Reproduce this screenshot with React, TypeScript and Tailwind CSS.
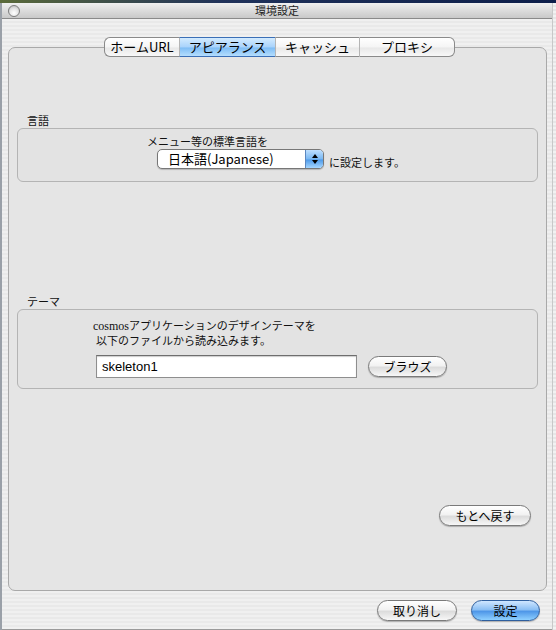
const jp = "font-['Lucida_Grande','Noto_Sans_CJK_JP',sans-serif]";

function AquaButton({ label, w, blue }: { label: string; w: string; blue?: boolean }) {
  return (
    <button
      className={`${w} h-[21px] rounded-full border text-[12px] leading-none text-black shadow-[0_1px_1px_rgba(0,0,0,0.25)] ${jp} ${
        blue
          ? "border-[#2f5f9e] bg-[linear-gradient(180deg,#cfe6ff_0%,#8cc0f4_45%,#4f97e8_55%,#8fd0ff_100%)]"
          : "border-[#7a7a7a] bg-[linear-gradient(180deg,#ffffff_0%,#f2f2f2_45%,#dcdcdc_55%,#f7f7f7_100%)]"
      }`}
    >
      {label}
    </button>
  );
}

function Tab({ label, w, active, first, last }: { label: string; w: string; active?: boolean; first?: boolean; last?: boolean }) {
  return (
    <div
      className={`${w} h-[20px] flex items-center justify-center text-[13px] text-black border-y border-[#8a8a8a] ${
        first ? "border-l rounded-l-[6px]" : "border-l border-l-[#b5b5b5]"
      } ${last ? "border-r rounded-r-[6px]" : ""} ${
        active
          ? "bg-[linear-gradient(180deg,#d3ebff_0%,#a9d3fb_50%,#7fbdf5_55%,#b4defe_100%)] border-y-[#3b6fb6]"
          : "bg-[linear-gradient(180deg,#ffffff_0%,#f5f5f5_50%,#e8e8e8_55%,#f8f8f8_100%)]"
      }`}
    >
      {label}
    </div>
  );
}

export default function App() {
  return (
    <div className={`w-[556px] h-[630px] flex flex-col bg-[#1d2b4c] ${jp}`}>
      <div className="h-[3px] bg-[linear-gradient(90deg,#5b6b3a,#20325a_40%,#0d1e4a)]" />
      <div className="flex flex-1">
        <div className="w-[2px] bg-[#9aa0a8]" />
        {/* window */}
        <div className="flex-1 flex flex-col border-b border-[#9a9a9a]">
          {/* title bar */}
          <div className="h-[16px] flex items-center px-[6px] bg-[linear-gradient(180deg,#f0f0f0_0%,#dcdcdc_50%,#c9c9c9_100%)] border-b border-[#8a8a8a]">
            <div className="w-[12px] h-[12px] rounded-full border border-[#7d7d7d] bg-[radial-gradient(circle_at_50%_70%,#ffffff_0%,#e4e4e4_50%,#b5b5b5_100%)]" />
            <div className="flex-1 text-center text-[11px] text-[#222] pr-[12px]">環境設定</div>
          </div>
          {/* body */}
          <div className="flex-1 flex flex-col px-[5px] pt-[18px] bg-[repeating-linear-gradient(180deg,#f0f0f0_0px,#f0f0f0_2px,#e9e9e9_2px,#e9e9e9_4px)]">
            <div className="relative z-10 flex justify-center pl-[4px] ml-[1px]">
              <Tab label="ホームURL" w="w-[75px]" first />
              <Tab label="アピアランス" w="w-[96px]" active />
              <Tab label="キャッシュ" w="w-[84px]" />
              <Tab label="プロキシ" w="w-[96px]" last />
            </div>
            <div className="-mt-[10px] ml-[1px] h-[544px] flex flex-col px-[8px] border border-[#a9a9a9] rounded-[7px] bg-[#e5e5e5]">
              <div className="mt-[65px] pl-[10px] h-[15px] text-[11px] leading-[15px] text-[#111]">言語</div>
              <div className="h-[54px] border border-[#b4b4b4] rounded-[6px] bg-[#e3e3e3] pl-[129px] pt-[5px]">
                <div className="text-[11px] leading-[15px] text-[#111]">メニュー等の標準言語を</div>
                <div className="flex items-end ml-[10px]">
                  <div className="w-[167px] h-[20px] flex border border-[#777] rounded-[5px] bg-white overflow-hidden shadow-[0_1px_1px_rgba(0,0,0,0.2)]">
                    <div className="flex-1 text-[13px] leading-[18px] pl-[10px] text-black">日本語(Japanese)</div>
                    <div className="w-[18px] flex flex-col items-center justify-center gap-[2px] bg-[linear-gradient(180deg,#bfe0ff_0%,#79b7f2_50%,#4f9bea_55%,#a5d6ff_100%)] border-l border-[#5b87c0]">
                      <div className="w-0 h-0 border-x-[3px] border-x-transparent border-b-[4px] border-b-black" />
                      <div className="w-0 h-0 border-x-[3px] border-x-transparent border-t-[4px] border-t-black" />
                    </div>
                  </div>
                  <div className="ml-[5px] text-[11px] leading-[14px] text-[#111]">に設定します。</div>
                </div>
              </div>
              <div className="mt-[112px] pl-[10px] h-[15px] text-[11px] leading-[15px] text-[#111]">テーマ</div>
              <div className="h-[80px] border border-[#b4b4b4] rounded-[6px] bg-[#e3e3e3] pl-[75px] pt-[8px]">
                <div className="text-[11px] leading-[14px] text-[#111]">
                  <span className="font-['Liberation_Serif',serif] text-[12px]">cosmos</span>アプリケーションのデザインテーマを
                </div>
                <div className="text-[11px] leading-[14px] text-[#111] pl-[3px]">以下のファイルから読み込みます。</div>
                <div className="flex items-center mt-[8px] ml-[3px] gap-[11px]">
                  <div className="w-[261px] h-[23px] border border-[#8e8e8e] border-t-[#6e6e6e] bg-white shadow-[inset_0_1px_1px_rgba(0,0,0,0.2)] font-['Liberation_Sans',sans-serif] text-[13px] leading-[21px] pl-[5px] text-black">
                    skeleton1
                  </div>
                  <AquaButton label="ブラウズ" w="w-[79px]" />
                </div>
              </div>
              <div className="mt-[116px] flex justify-end pr-[7px]">
                <AquaButton label="もとへ戻す" w="w-[92px]" />
              </div>
            </div>
            <div className="mt-[9px] flex justify-end gap-[14px] pr-[7px]">
              <AquaButton label="取り消し" w="w-[80px]" />
              <AquaButton label="設定" w="w-[69px]" blue />
            </div>
          </div>
        </div>
        <div className="w-[4px] bg-[repeating-linear-gradient(180deg,#f2f2f2_0px,#f2f2f2_2px,#e6e6e6_2px,#e6e6e6_4px)] border-l border-[#c8c8c8]" />
      </div>
    </div>
  );
}
